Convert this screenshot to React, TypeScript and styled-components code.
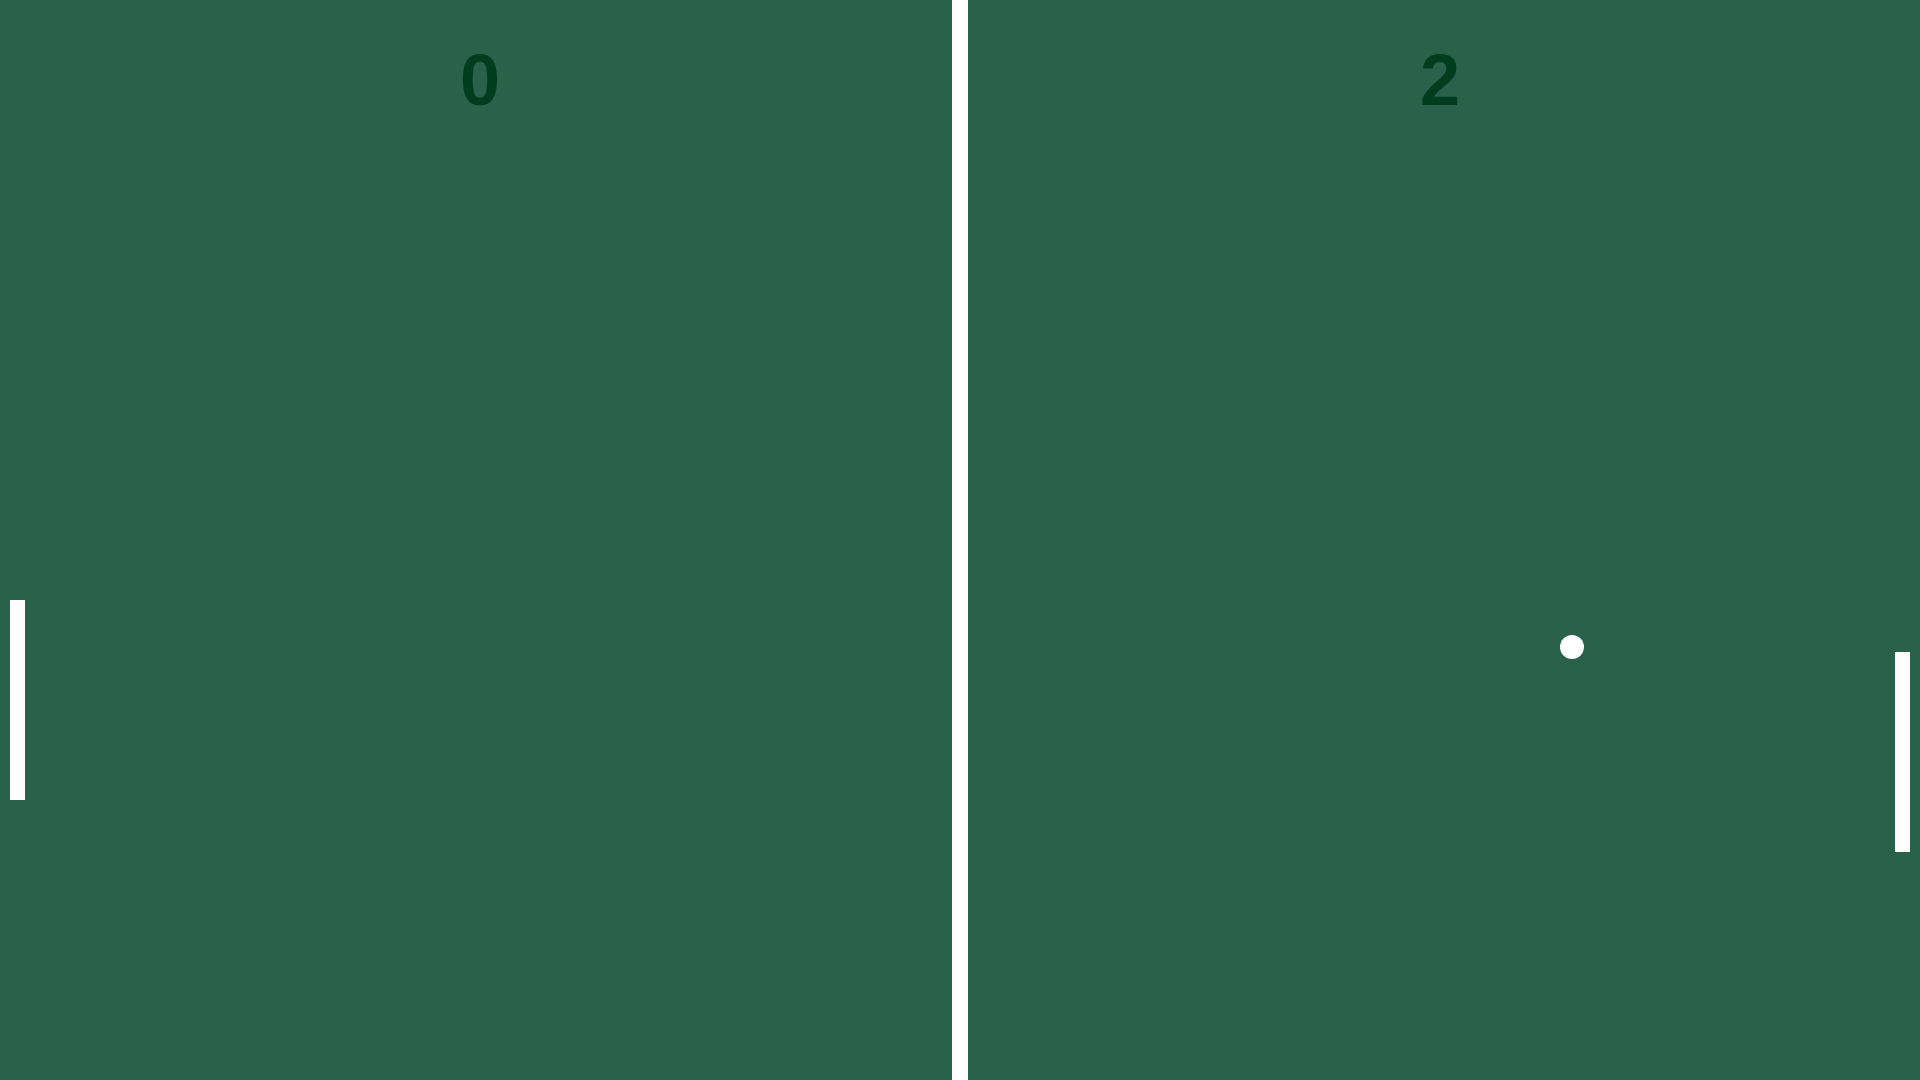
import React from "react";
import styled, { createGlobalStyle } from "styled-components";

const GlobalStyle = createGlobalStyle`
  html, body { margin: 0; padding: 0; height: 100%; overflow: hidden; }
  body { background: #29614a; font-family: "Liberation Sans", Arial, sans-serif; }
  #root { height: 100%; }
`;

const Court = styled.div`
  position: relative;
  width: 1920px;
  height: 1080px;
  display: grid;
  grid-template-columns: 1fr 1fr;
  background: #29614a;
  overflow: hidden;
`;

const Half = styled.div`
  display: flex;
  justify-content: center;
  align-items: flex-start;
  padding-top: 39px;
`;

const Score = styled.div`
  font-family: "Liberation Sans", Arial, sans-serif;
  font-weight: 700;
  font-size: 72px;
  line-height: normal;
  color: #003d1f;
`;

const Net = styled.div`
  position: absolute;
  top: 0;
  bottom: 0;
  left: 952px;
  width: 16px;
  background: #ffffff;
`;

const Paddle = styled.div<{ $side: "left" | "right" }>`
  position: absolute;
  width: 15px;
  height: 200px;
  background: #ffffff;
  ${(p) => (p.$side === "left" ? "left: 10px;" : "right: 10px;")}
`;

const Ball = styled.div`
  position: absolute;
  width: 24px;
  height: 24px;
  border-radius: 50%;
  background: #ffffff;
`;

export default function App() {
  const leftY = 600;
  const rightY = 652;
  const ball = { x: 1560, y: 635 };
  return (
    <>
      <GlobalStyle />
      <Court>
        <Half>
          <Score>0</Score>
        </Half>
        <Half>
          <Score>2</Score>
        </Half>
        <Net />
        <Paddle $side="left" style={{ top: leftY }} />
        <Paddle $side="right" style={{ top: rightY }} />
        <Ball style={{ left: ball.x, top: ball.y }} />
      </Court>
    </>
  );
}
